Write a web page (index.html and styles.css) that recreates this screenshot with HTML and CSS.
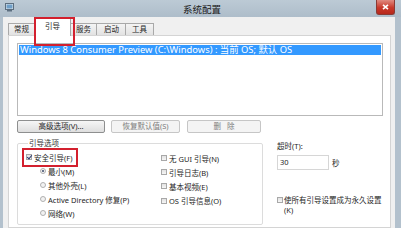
FILE: index.html
```html
<!DOCTYPE html>
<html lang="zh-CN">
<head>
<meta charset="utf-8">
<title>系统配置</title>
<link rel="stylesheet" href="styles.css">
</head>
<body>
<div class="win">
  <div class="titlebar">
    <svg class="appicon" width="9" height="9" viewBox="0 0 9 9"><rect x="0.5" y="0.5" width="8" height="6" fill="#dfe7ee" stroke="#5d6f80"/><rect x="1.5" y="1.5" width="6" height="4" fill="#6f9fc8"/><rect x="2" y="7" width="5" height="1.5" fill="#5d6f80"/></svg>
    <span class="ttext">系统配置</span>
    <span class="close"><svg width="7" height="6" viewBox="0 0 7 6"><path d="M1 0.8 L6 5.2 M6 0.8 L1 5.2" stroke="#fff" stroke-width="1.6"/></svg></span>
  </div>
  <div class="client">
    <div class="tabs">
      <div class="tab">常规</div>
      <div class="tab sel">引导</div>
      <div class="tab">服务</div>
      <div class="tab">启动</div>
      <div class="tab">工具</div>
    </div>
    <div class="panel">
      <div class="list">
        <div class="row">Windows 8 Consumer Preview (C:\Windows) : 当前 OS; 默认 OS</div>
      </div>
      <div class="btns">
        <div class="btn b1">高级选项(V)...</div>
        <div class="btn b2 dis">恢复默认值(S)</div>
        <div class="btn b3 dis">删&nbsp;&nbsp;&nbsp;除</div>
      </div>
      <div class="lower">
        <fieldset class="group">
          <legend>引导选项</legend>
          <div class="cols">
            <div class="col1">
              <div class="opt"><span class="safe"><span class="cb on"></span>安全引导(F)</span></div>
              <div class="opt sub"><span class="rb on"></span>最小(M)</div>
              <div class="opt sub"><span class="rb"></span>其他外壳(L)</div>
              <div class="opt sub"><span class="rb"></span>Active Directory 修复(P)</div>
              <div class="opt sub"><span class="rb"></span>网络(W)</div>
            </div>
            <div class="col2">
              <div class="opt"><span class="cb"></span>无 GUI 引导(N)</div>
              <div class="opt"><span class="cb"></span>引导日志(B)</div>
              <div class="opt"><span class="cb"></span>基本视频(E)</div>
              <div class="opt"><span class="cb"></span>OS 引导信息(O)</div>
            </div>
          </div>
        </fieldset>
        <div class="side">
          <div class="tlabel">超时(T):</div>
          <div class="trow"><div class="input">30</div><span class="sec">秒</span></div>
          <div class="perm"><span class="cb"></span><span class="ptext">使所有引导设置成为永久设置<br>(K)</span></div>
        </div>
      </div>
    </div>
  </div>
</div>
</body>
</html>
```
FILE: styles.css
```css
* { box-sizing: border-box; }
html, body { margin: 0; padding: 0; }
body {
  width: 401px;
  height: 228px;
  overflow: hidden;
  background: #b3c1cd;
  font-family: "Noto Sans", "Noto Sans CJK SC", sans-serif;
  font-size: 7.5px;
  color: #1e1e1e;
}
.win { display: flex; flex-direction: column; height: 228px; }
.titlebar {
  height: 17px;
  display: flex;
  align-items: center;
  background: linear-gradient(#bccad5, #aebdca);
}
.appicon { margin-left: 5px; margin-top: -3px; }
.ttext { flex: 1; text-align: center; font-size: 9.5px; color: #1a1a1a; padding-left: 14px; }
.close {
  align-self: flex-start;
  width: 19px;
  height: 15px;
  margin-right: 6px;
  background: linear-gradient(#e08a80, #c8382a 55%, #b8281c);
  border: 1px solid #8a3a34;
  border-top: none;
  border-radius: 0 0 3px 3px;
  display: flex;
  align-items: center;
  justify-content: center;
}
.client {
  flex: 1;
  margin: 0 6px 0 3px;
  background: #f0f0f0;
  padding: 0 4px 0 5px;
  display: flex;
  flex-direction: column;
}
.tabs { height: 18px; display: flex; align-items: flex-end; position: relative; z-index: 2; }
.tab {
  height: 12px;
  line-height: 11px;
  padding: 0 5px;
  border: 1px solid #a9a9a9;
  border-bottom: none;
  background: linear-gradient(#f4f4f4, #e2e2e2);
  margin-right: -1px;
}
.tab:nth-child(4) { padding: 0 6px 0 7px; }
.tab:nth-child(5) { padding: 0 6px; }
.tab.sel {
  height: 18px;
  line-height: 14px;
  margin-bottom: -1px;
  padding: 0 10px;
  background: #fff;
  position: relative;
}
.tab.sel::after {
  content: "";
  position: absolute;
  left: -1px;
  top: -2px;
  width: 37px;
  height: 25px;
  border: 2px solid #d3202e;
}
.panel {
  flex: 1;
  background: #fff;
  border: 1px solid #d4d4d4;
  padding: 7px 7px 0 8px;
}
.list {
  height: 73px;
  border: 1px solid #b9b9b9;
  padding: 1px;
}
.row {
  height: 10px;
  line-height: 10px;
  background: #3399ff;
  color: #fff;
  padding-left: 1px;
  font-size: 9.4px;
  white-space: nowrap;
}
.btns { display: flex; margin-top: 4px; height: 13px; }
.btn {
  height: 13px;
  line-height: 11px;
  text-align: center;
  border: 1px solid #8e8f8f;
  border-radius: 2px;
  background: linear-gradient(#f6f6f6, #dedede);
}
.b1 { width: 88px; }
.b2 { width: 69px; margin-left: 6px; }
.b3 { width: 74px; margin-left: 7px; }
.btn.dis { color: #7d7d7d; border-color: #c6c6c6; background: #f4f4f4; }
.lower { display: flex; margin-top: 5px; }
.group {
  width: 246px;
  height: 87px;
  margin: 0;
  padding: 2px 0 0 8px;
  border: 1px solid #dcdcdc;
  border-radius: 2px;
  min-inline-size: 0;
}
.group legend { padding: 0 1px; margin-left: 2px; line-height: 10px; color: #333; }
.cols { display: flex; }
.col1 { width: 135px; }
.col2 { padding-top: 1px; }
.opt { height: 14px; display: flex; align-items: center; white-space: nowrap; }
.col2 .opt { height: 14.2px; }
.opt.sub { padding-left: 14px; }
.safe {
  display: inline-flex;
  align-items: center;
  position: relative;
  padding-right: 1px;
}
.safe::before {
  content: "";
  position: absolute;
  left: -4px;
  top: -4px;
  right: -5px;
  bottom: -4px;
  border: 2px solid #d3202e;
}
.cb {
  width: 6px;
  height: 6px;
  border: 1px solid #a8a8a8;
  background: linear-gradient(#e2e2e2, #f6f6f6);
  margin-right: 2px;
  flex: none;
  position: relative;
}
.cb.on::after {
  content: "";
  position: absolute;
  left: 1px;
  top: -1px;
  width: 2px;
  height: 4px;
  border: solid #2a3a70;
  border-width: 0 1.2px 1.2px 0;
  transform: rotate(40deg);
}
.rb {
  width: 6px;
  height: 6px;
  border: 1px solid #b0b0b0;
  border-radius: 50%;
  background: #f2f2f2;
  margin-right: 2px;
  flex: none;
  position: relative;
}
.rb.on::after {
  content: "";
  position: absolute;
  left: 1px;
  top: 1px;
  width: 2px;
  height: 2px;
  border-radius: 50%;
  background: #3a4a6a;
}
.side { margin-left: 14px; padding-top: 3px; }
.tlabel { line-height: 10px; }
.trow { display: flex; align-items: center; margin-top: 4px; }
.input {
  width: 52px;
  height: 15px;
  line-height: 13px;
  border: 1px solid #d6d6d6;
  padding-left: 2px;
}
.sec { margin-left: 3px; }
.perm { display: flex; margin-top: 25px; align-items: flex-start; }
.perm .cb { margin-top: 2px; margin-right: 1px; }
.ptext { line-height: 10px; white-space: nowrap; }
```
